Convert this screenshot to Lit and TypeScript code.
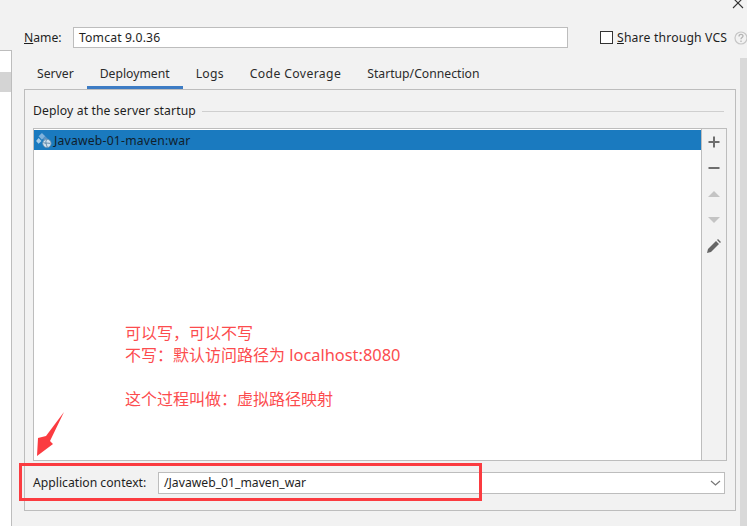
import { LitElement, html, css, svg } from "lit";
import { customElement } from "lit/decorators.js";

@customElement("app-root")
export class AppRoot extends LitElement {
  static styles = css`
    :host {
      display: flex;
      position: relative;
      width: 747px;
      height: 526px;
      overflow: hidden;
      background: #f2f2f2;
      color: #1e1e1e;
      font-family: "Noto Sans", "Open Sans", sans-serif;
      font-size: 12.2px;
      line-height: 20px;
    }
    .side {
      flex: none;
      box-sizing: border-box;
      width: 12px;
      margin-top: 50px;
      padding-top: 21px;
      background: #fff;
      border-top: 1px solid #bdbdbd;
      border-right: 1px solid #bdbdbd;
    }
    .side-row { height: 20px; background: #d4d4d4; }
    .main { flex: 1; min-width: 0; padding-left: 12px; display: flex; flex-direction: column; }
    .head { display: flex; align-items: center; height: 21px; margin-top: 27px; margin-bottom: 10px; }
    .name-label { width: 49px; flex: none; }
    .name-input {
      box-sizing: border-box; width: 495px; height: 21px; flex: none;
      background: #fff; border: 1px solid #bdbdbd; padding-left: 5px; line-height: 19px; letter-spacing: 0.15px;
    }
    .vcs { display: flex; align-items: center; margin-left: 32px; white-space: nowrap; }
    .vcs span { letter-spacing: 0.17px; }
    .check { box-sizing: border-box; width: 13px; height: 13px; background: #fff; border: 1px solid #333; margin-right: 4px; }
    .help { margin-left: 7px; flex: none; }
    .body { flex: 1; display: flex; gap: 4px; min-height: 0; }
    .content { flex: none; width: 712px; display: flex; flex-direction: column; }
    .tabs { display: flex; height: 31px; flex: none; }
    .tab { box-sizing: border-box; height: 31px; padding: 6px 13px 0; color: #2b2b2b; white-space: nowrap; }
    .tab.on { border-bottom: 3px solid #3d7cc4; }
    .tab.logs { letter-spacing: 0.25px; }
    .tab.wide { letter-spacing: 0.38px; }
    .panel {
      box-sizing: border-box; height: 422px; flex: none; display: flex; flex-direction: column;
      border: 1px solid #bdbdbd; padding: 11px 8px 0 8px;
    }
    .legend { display: flex; align-items: center; gap: 6px; height: 20px; margin-right: 3px; letter-spacing: 0.11px; }
    .legend i { flex: 1; height: 1px; background: #cfcfcf; }
    .list {
      box-sizing: border-box; display: flex; height: 333px; margin-top: 7px;
      border: 1px solid #bdbdbd; flex: none;
    }
    .rows { flex: 1; background: #fff; padding-top: 1px; min-width: 0; }
    .row { display: flex; align-items: center; height: 20px; background: #1a7abf; padding-left: 2px; gap: 2px; color: #10202c; }
    .row span { letter-spacing: 0.2px; padding-top: 2px; }
    .tools {
      box-sizing: border-box; width: 25px; flex: none; border-left: 1px solid #bdbdbd;
      display: flex; flex-direction: column; align-items: center; padding-top: 5px;
    }
    .tools svg { display: block; margin-bottom: 10px; }
    .ctx { display: flex; align-items: center; height: 22px; margin-top: 11px; margin-right: 2px; }
    .ctx-label { width: 125px; flex: none; }
    .combo {
      box-sizing: border-box; flex: 1; height: 22px; display: flex; align-items: center;
      justify-content: space-between; background: #fff; border: 1px solid #bdbdbd; padding: 0 3px 0 5px;
    }
    .scroll { flex: none; width: 7px; background: #d9d9d9; }
    .close { position: absolute; left: 732px; top: -3px; }
    .frame {
      position: absolute; box-sizing: border-box; left: 19px; top: 463px; width: 463px; height: 38px;
      border: 3px solid #fb3b40;
    }
    .arrow { position: absolute; left: 30px; top: 405px; }
    .note {
      position: absolute; left: 125px; top: 321px; color: #fc4c4e; font-size: 16px; line-height: 22px;
      font-family: "Noto Sans CJK SC", "Noto Sans", sans-serif; font-weight: 400; white-space: pre;
    }
    .line { display: block; height: 22px; }
    .lat { font-family: "Noto Sans", sans-serif; font-size: 16.4px; line-height: 1; }
  `;

  private depIcon() {
    return svg`<svg width="16" height="15" viewBox="0 0 19 18">
      <path d="M7 0l4 4-4 4-4-4z" fill="#7fb2dc"/>
      <path d="M3 6l3.500 3.500L3 13l-3-3.500z" fill="#a9cde8"/>
      <path d="M11 4l3 3-3 3-3-3z" fill="#5b93c4"/>
      <circle cx="13" cy="12.500" r="5" fill="#cfe0ee" stroke="#6f93b0"/>
      <path d="M9 11.500c2.500 1.500 3.500 0 8 1M12.500 8c-1.500 2-.5 6 1 9" fill="none" stroke="#4f7c9f"/>
    </svg>`;
  }

  render() {
    return html`
      <div class="side"><div class="side-row"></div></div>
      <div class="main">
        <div class="head">
          <div class="name-label"><u>N</u>ame:</div>
          <div class="name-input">Tomcat 9.0.36</div>
          <div class="vcs">
            <div class="check"></div>
            <span><u>S</u>hare through VCS</span>
            <svg class="help" width="13" height="14" viewBox="0 0 13 14">
              <circle cx="7" cy="7" r="6" fill="none" stroke="#c6c6c6" stroke-width="1.2"/>
              <path d="M5 5.400c0-2.600 4-2.600 4-.3 0 1.500-2 1.500-2 3.200M7 9.500v1.500" fill="none" stroke="#b4b4b4" stroke-width="1.300"/>
            </svg>
          </div>
        </div>
        <div class="body">
          <div class="content">
            <div class="tabs">
              <div class="tab">Server</div>
              <div class="tab on">Deployment</div>
              <div class="tab logs">Logs</div>
              <div class="tab wide">Code Coverage</div>
              <div class="tab">Startup/Connection</div>
            </div>
            <div class="panel">
              <div class="legend"><span>Deploy at the server startup</span><i></i></div>
              <div class="list">
                <div class="rows">
                  <div class="row">${this.depIcon()}<span>Javaweb-01-maven:war</span></div>
                </div>
                <div class="tools">
                  <svg width="16" height="16" viewBox="0 0 16 16"><path d="M8 2.500v11M2.500 8h11" stroke="#6e6e6e" stroke-width="2"/></svg>
                  <svg width="16" height="16" viewBox="0 0 16 16"><path d="M2.500 8h11" stroke="#6e6e6e" stroke-width="2"/></svg>
                  <svg width="16" height="16" viewBox="0 0 16 16"><path d="M2 11l6-6 6 6z" fill="#c4c4c4"/></svg>
                  <svg width="16" height="16" viewBox="0 0 16 16"><path d="M2 5h12l-6 6z" fill="#c4c4c4"/></svg>
                  <svg width="16" height="16" viewBox="0 0 16 16"><path d="M1 15l1-4 8-8 3 3-8 8zM11 2l1-1 3 3-1 1z" fill="#666"/></svg>
                </div>
              </div>
              <div class="ctx">
                <div class="ctx-label">Application context:</div>
                <div class="combo">
                  <span>/Javaweb_01_maven_war</span>
                  <svg width="11" height="7" viewBox="0 0 11 7"><path d="M1 1l4.500 4 4.500-4" fill="none" stroke="#777" stroke-width="1.200"/></svg>
                </div>
              </div>
            </div>
          </div>
          <div class="scroll"></div>
        </div>
      </div>
      <svg class="close" width="12" height="12" viewBox="0 0 12 12"><path d="M1 1l10 10M11 1L1 11" stroke="#333" stroke-width="1.100"/></svg>
      <div class="note"><span class="line">可以写，可以不写</span><span class="line">不写：默认访问路径为<span class="lat"> localhost:8080</span></span><span class="line"></span><span class="line">这个过程叫做：虚拟路径映射</span></div>
      <svg class="arrow" width="40" height="55" viewBox="30 405 40 55">
        <path d="M64 412L46 436 38 438 37 456 53 444 50 441z" fill="#fb3b40"/>
      </svg>
      <div class="frame"></div>
    `;
  }
}
